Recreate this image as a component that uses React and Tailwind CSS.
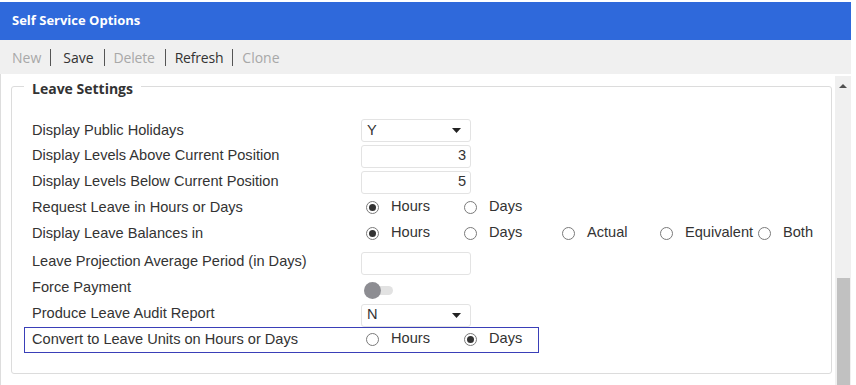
import React from "react";

function Radio({ checked, label, className = "" }) {
  return (
    <div className={"flex items-center " + className}>
      <span className="w-[13px] h-[13px] rounded-full border border-[#7a7a7a] bg-white flex items-center justify-center shrink-0">
        {checked && <span className="w-[7px] h-[7px] rounded-full bg-[#333]" />}
      </span>
      <span className="ml-[12px] mt-[-3px]">{label}</span>
    </div>
  );
}

function Select({ value }) {
  return (
    <div className="w-[110px] h-[23px] border border-[#e3e3e3] rounded-[3px] flex items-center justify-between pl-[5px] pr-[9px] bg-white">
      <span>{value}</span>
      <svg width="9" height="5" viewBox="0 0 9 5"><path d="M0 0h9L4.5 5z" fill="#222" /></svg>
    </div>
  );
}

function Input({ value }) {
  return (
    <div className="w-[110px] h-[23px] border border-[#e3e3e3] rounded-[3px] flex items-center justify-end pr-[4px] bg-white">
      {value}
    </div>
  );
}

function Row({ label, children, boxed, className = "h-[26px]" }) {
  return (
    <div className={"flex items-center " + (boxed ? "border border-[#3a3fb8] ml-[-8px] pl-[7px] w-[515px] " : "") + className}>
      <div className="w-[329px] shrink-0">{label}</div>
      <div className="flex items-center">{children}</div>
    </div>
  );
}

export default function App() {
  const opt = "w-[98px]";
  return (
    <div className="w-[856px] h-[385px] bg-white overflow-hidden" style={{ fontFamily: "'Liberation Sans', Arial, sans-serif" }}>
      <div className="w-[851px] mt-[2px]">
        <div className="h-[38px] bg-[#2f69db] flex items-center pl-[12px]">
          <span className="text-white font-bold text-[13px]" style={{ fontFamily: "'Open Sans', sans-serif" }}>Self Service Options</span>
        </div>
        <div className="h-[34px] bg-[#f0f0f0] flex items-center pl-[12px] pt-[1px] text-[14px]" style={{ fontFamily: "'Open Sans', sans-serif" }}>
          <span className="text-[#a8a8a8]">New</span>
          <span className="ml-[9px] mr-[12px] w-px h-[17px] bg-[#555]" />
          <span className="text-[#333]">Save</span>
          <span className="ml-[10px] mr-[9px] w-px h-[17px] bg-[#555]" />
          <span className="text-[#a8a8a8] tracking-[-0.2px]">Delete</span>
          <span className="ml-[10px] mr-[9px] w-px h-[17px] bg-[#555]" />
          <span className="text-[#333] tracking-[-0.2px]">Refresh</span>
          <span className="ml-[9px] mr-[9px] w-px h-[17px] bg-[#555]" />
          <span className="text-[#a8a8a8]">Clone</span>
        </div>
        <div className="flex h-[311px] border-l border-[#ddd]">
          <div className="flex-1 pl-[10px] pr-[2px]">
            <fieldset className="border border-[#dcdcdc] rounded-[3px] h-[300px] w-[821px] pl-[20px] pr-[10px] pt-[19px]">
              <legend className="ml-[-8px] px-[8px] pt-[4px] text-[14px] font-bold text-[#333]" style={{ fontFamily: "'Open Sans', sans-serif" }}>Leave Settings</legend>
              <div className="text-[14.6px] text-[#333]">
                <Row className="h-[25px]" label="Display Public Holidays"><Select value="Y" /></Row>
                <Row label="Display Levels Above Current Position"><Input value="3" /></Row>
                <Row label="Display Levels Below Current Position"><Input value="5" /></Row>
                <Row label="Request Leave in Hours or Days">
                  <div className="flex pl-[5px]">
                    <Radio checked label="Hours" className={opt} />
                    <Radio label="Days" className={opt} />
                  </div>
                </Row>
                <Row label="Display Leave Balances in">
                  <div className="flex pl-[5px]">
                    <Radio checked label="Hours" className={opt} />
                    <Radio label="Days" className={opt} />
                    <Radio label="Actual" className={opt} />
                    <Radio label="Equivalent" className={opt} />
                    <Radio label="Both" />
                  </div>
                </Row>
                <Row className="h-[26px] mt-[2px]" label="Leave Projection Average Period (in Days)"><div className="mt-[2px]"><Input value="" /></div></Row>
                <Row label="Force Payment">
                  <div className="relative w-[30px] h-[17px] ml-[3px] mt-[4px]">
                    <div className="absolute left-[10px] top-[4px] w-[19px] h-[9px] rounded-full bg-[#e2e2e2]" />
                    <div className="absolute left-0 top-0 w-[17px] h-[17px] rounded-full bg-[#8d8d92]" />
                  </div>
                </Row>
                <Row label="Produce Leave Audit Report"><div className="mt-[2px]"><Select value="N" /></div></Row>
                <Row boxed label="Convert to Leave Units on Hours or Days">
                  <div className="flex pl-[5px]">
                    <Radio label="Hours" className={opt} />
                    <Radio checked label="Days" />
                  </div>
                </Row>
              </div>
            </fieldset>
          </div>
          <div className="w-[16px] bg-[#f0f0f0] relative mt-[2px]">
            <svg className="absolute left-[4px] top-[8px]" width="8" height="4" viewBox="0 0 8 4"><path d="M0 4h8L4 0z" fill="#505050" /></svg>
            <div className="absolute left-[2px] right-[1px] top-[202px] bottom-0 bg-[#c1c1c1]" />
          </div>
        </div>
      </div>
    </div>
  );
}
